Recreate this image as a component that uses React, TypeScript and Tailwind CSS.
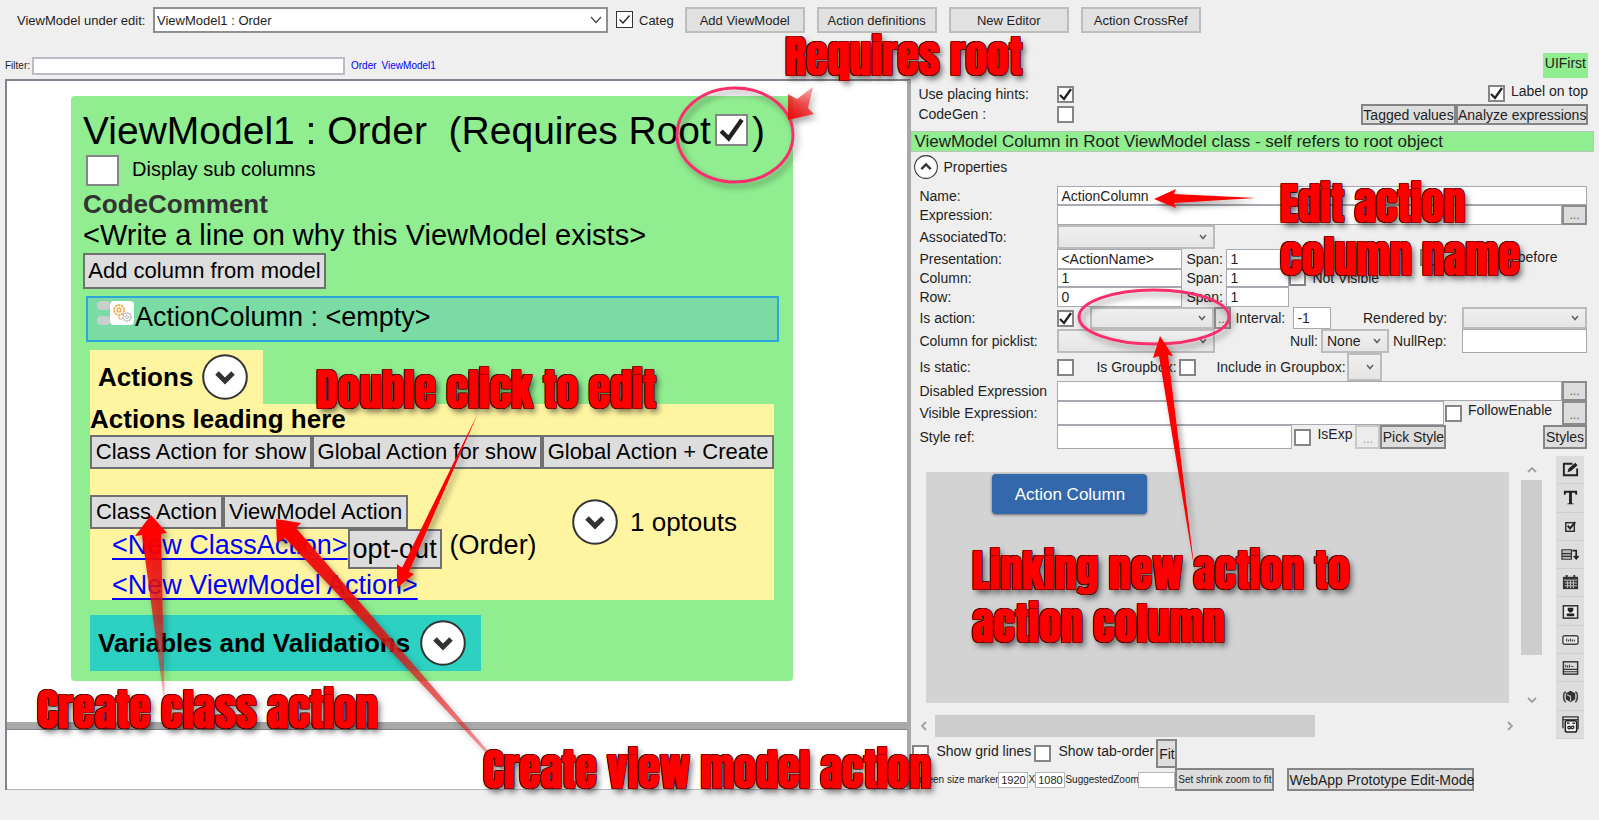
import React from "react";

const CHECK = "M3 9 L7 13 L14 3";

function Check({ id, checked, box = "size-[17px]", thin, label }: { id: string; checked?: boolean; box?: string; thin?: boolean; label?: string }) {
  return (
    <span className={`relative inline-block shrink-0 ${box}`}>
      <input
        id={id}
        type="checkbox"
        defaultChecked={checked}
        aria-label={label}
        className={`peer block size-full appearance-none bg-white ${thin ? "border border-[#333]" : "border-2 border-[#858585]"}`}
      />
      <svg viewBox="0 0 17 17" className="pointer-events-none absolute inset-0 hidden size-full peer-checked:block" fill="none" stroke="#222">
        {thin ? <path d="M3.5 8.5 L7 12 L13.500 4.500" strokeWidth="1.300" /> : <path d={CHECK} strokeWidth="2.300" />}
      </svg>
    </span>
  );
}

function Drop({ id, className, value, label }: { id: string; className: string; value?: string; label?: string }) {
  return (
    <span className={`relative block shrink-0 ${className}`}>
      <select id={id} aria-label={label} className="block size-full appearance-none border-2 border-[#bcbcbc] bg-linear-to-b from-[#efefef] to-[#e5e5e5] pl-1 leading-none">
        <option>{value ?? ""}</option>
      </select>
      <svg viewBox="0 0 8 8" className="pointer-events-none absolute top-1/2 right-2 size-2 -translate-y-1/2" fill="none" stroke="#606060" strokeWidth="1.500">
        <path d="M1 2 L4 5.500 L7 2" />
      </svg>
    </span>
  );
}

function Field({ id, className, value, label }: { id: string; className: string; value?: string; label?: string }) {
  return (
    <input
      id={id}
      type="text"
      aria-label={label}
      defaultValue={value}
      className={`block h-full min-w-0 border border-[#a8a8b0] bg-white px-[3px] leading-none ${className}`}
    />
  );
}

function Dots({ className = "w-[25px]", faded, label }: { className?: string; faded?: boolean; label: string }) {
  return (
    <button
      aria-label={label}
      className={`flex h-full shrink-0 items-end justify-center border-2 text-[12px] leading-none pb-[2px] ${faded ? "border-[#c8c8c8] bg-[#ececec] text-[#999]" : "border-[#8c8c8c] bg-[#dddddd] text-[#555]"} ${className}`}
    >
      ...
    </button>
  );
}

function Row({ label, htmlFor, h, children }: { label: string; htmlFor: string; h: string; children: React.ReactNode }) {
  return (
    <div className={`flex ${h}`}>
      <label htmlFor={htmlFor} className="flex w-[138px] shrink-0 items-center whitespace-nowrap">
        {label}
      </label>
      <div className="flex min-w-0 flex-1 items-stretch">{children}</div>
    </div>
  );
}

function Chevron({ label, up, size = "size-[46px]" }: { label: string; up?: boolean; size?: string }) {
  return (
    <button aria-label={label} className={`block shrink-0 ${size}`}>
      <svg viewBox="0 0 46 46" className="size-full" fill="none">
        <circle cx="23" cy="23" r="21.800" fill="#fff" stroke="#333" strokeWidth="2" />
        {up ? <path d="M14 27 L23 18 L32 27" stroke="#333" strokeWidth="4.500" /> : <path d="M15 19 L23 27 L31 19" stroke="#333" strokeWidth="5" />}
      </svg>
    </button>
  );
}

function TopButton({ children }: { children: string }) {
  return <button className="h-[26px] w-[120px] border-2 border-[#bdbdbd] bg-[#e1e1e1] text-center leading-none">{children}</button>;
}

function BigButton({ children, className = "" }: { children: string; className?: string }) {
  return (
    <button className={`border-2 border-[#707070] bg-[#dddddd] text-[22px] leading-[30px] whitespace-nowrap ${className}`}>{children}</button>
  );
}

function FlatButton({ children, className = "" }: { children: string; className?: string }) {
  return (
    <button className={`shrink-0 border-2 border-[#858585] bg-[#dddddd] leading-none whitespace-nowrap ${className}`}>{children}</button>
  );
}

const note =
  "pointer-events-none absolute font-['Impact','Anton','Roboto_Condensed','Open_Sans_Condensed','Roboto',sans-serif] text-[44px] leading-[53px] font-normal whitespace-nowrap text-[#ff0000] [-webkit-text-stroke:1px_#ff0000] [text-shadow:1px_0_0_#200,-1px_0_0_#200,0_1px_0_#200,0_-1px_0_#200,1px_1px_0_#200,-1px_-1px_0_#200,1px_-1px_0_#200,-1px_1px_0_#200,3px_4px_6px_rgba(0,0,0,0.6)]";

const tools: { name: string; art: React.ReactNode }[] = [
  {
    name: "Edit box",
    art: (
      <>
        <path d="M12 4H3v12h14V9" fill="none" stroke="#222" strokeWidth="2" />
        <path d="M7 13l1-4 7-6 2.500 2.500-7 6z" fill="#222" />
      </>
    ),
  },
  { name: "Text", art: <path d="M3 3h14v4h-1.500l-1-2H11.500v11l2 .5V17h-7v-.5l2-.5V5H5.500l-1 2H3z" fill="#222" /> },
  {
    name: "Check box",
    art: (
      <>
        <rect x="5" y="6" width="9" height="9" fill="none" stroke="#333" strokeWidth="1.600" />
        <path d="M7 9l2.500 3L15 5.500" fill="none" stroke="#222" strokeWidth="2" />
      </>
    ),
  },
  {
    name: "Drop-down",
    art: (
      <>
        <path d="M1 5h10v4H1zM1 9h10v3H1zM1 12h10v3H1z" fill="#bbb" stroke="#333" strokeWidth="1.300" />
        <path d="M12 6h4v8M13.500 11.500l2.500 3 2.500-3" fill="none" stroke="#222" strokeWidth="1.800" />
      </>
    ),
  },
  {
    name: "Calendar",
    art: (
      <>
        <path d="M2 4h16v13H2z" fill="#333" />
        <path d="M6 2v3M14 2v3" stroke="#333" strokeWidth="2" />
        <path d="M3 7.500h14M4 10.500h13M4 13.500h13M7 8v8M10 8v8M13 8v8" stroke="#ccc" strokeWidth="1" />
      </>
    ),
  },
  {
    name: "Image",
    art: (
      <>
        <rect x="2.500" y="4" width="15" height="13" fill="#eee" stroke="#333" strokeWidth="1.600" />
        <path d="M7 6h6v3l-2 2h-2L7 9z M6 12h8v3H6z" fill="#222" />
      </>
    ),
  },
  {
    name: "Button",
    art: (
      <>
        <rect x="2" y="6" width="16" height="9" rx="2" fill="#e8e8e8" stroke="#444" strokeWidth="1.500" />
        <path d="M6 9v3M8 10v2M10 9v3M12 10v2M14 10v2" stroke="#444" strokeWidth="1.200" />
      </>
    ),
  },
  {
    name: "List",
    art: (
      <>
        <rect x="2.500" y="4" width="15" height="13" fill="#ddd" stroke="#333" strokeWidth="1.500" />
        <path d="M3 12h14M3 14.500h14" stroke="#333" strokeWidth="1.200" />
        <path d="M5 7v3M7 8v2M9 7v3M11 9h2" stroke="#333" strokeWidth="1.200" />
      </>
    ),
  },
  {
    name: "Component",
    art: (
      <>
        <path d="M5 5C2 6 2 14 5 16M15 5c3 1 3 9 0 11" fill="none" stroke="#444" strokeWidth="1.600" />
        <path d="M10 4l5 2.500v6.500L10 16l-5-3V6.500z" fill="#333" />
        <path d="M10 9v6M6 8l4 2" stroke="#bbb" strokeWidth="1.200" />
      </>
    ),
  },
  {
    name: "Nested view",
    art: (
      <>
        <path d="M2 14V2h16v13" fill="none" stroke="#333" strokeWidth="1.400" />
        <path d="M2 5h16" stroke="#333" strokeWidth="1.400" />
        <rect x="4.500" y="6" width="12" height="12" rx="2" fill="#eee" stroke="#222" strokeWidth="1.600" />
        <path d="M7 9.500V8.500h2M14 9.500V8.500h-2M7 13c1-2 2.500-1 3.500.500s2.500 1 3-.500-2-2-3 0-3 2-3.500 0" fill="none" stroke="#222" strokeWidth="1.300" />
      </>
    ),
  },
];

function Arrows() {
  return (
    <svg width="1599" height="820" viewBox="0 0 1599 820" className="pointer-events-none absolute top-0 left-0" aria-hidden="true">
      <defs>
        <filter id="soft" x="-20%" y="-20%" width="150%" height="150%">
          <feDropShadow dx="3" dy="4" stdDeviation="3" floodOpacity="0.400" />
        </filter>
        <linearGradient id="fadeRoot" gradientUnits="userSpaceOnUse" x1="790" y1="118" x2="818" y2="84">
          <stop offset="0" stopColor="#ee1010" />
          <stop offset="1" stopColor="#ee1010" stopOpacity="0.250" />
        </linearGradient>
        <linearGradient id="fadeClass" gradientUnits="userSpaceOnUse" x1="151" y1="530" x2="165" y2="708">
          <stop offset="0" stopColor="#ff0000" />
          <stop offset="0.550" stopColor="#d81818" stopOpacity="0.700" />
          <stop offset="1" stopColor="#ff0000" stopOpacity="0.150" />
        </linearGradient>
        <linearGradient id="fadeView" gradientUnits="userSpaceOnUse" x1="276" y1="519" x2="531" y2="801">
          <stop offset="0" stopColor="#ff0000" />
          <stop offset="0.400" stopColor="#d81818" stopOpacity="0.880" />
          <stop offset="0.800" stopColor="#e81818" stopOpacity="0.450" />
          <stop offset="1" stopColor="#ff0000" stopOpacity="0" />
        </linearGradient>
      </defs>
      <g filter="url(#soft)">
        <ellipse cx="735" cy="135" rx="58" ry="47" fill="none" stroke="#f92f6c" strokeWidth="3" />
        <ellipse cx="1154" cy="317" rx="75" ry="27" fill="none" stroke="#f92f6c" strokeWidth="3" />
        <path d="M788 94 L797 99 L813 87 L808 108 L814 114 L788 120 Z" fill="url(#fadeRoot)" />
        <path d="M1154 199 L1176 189 L1174 194 L1256 198 L1174 203 L1176 208 Z" fill="#ff0000" />
        <path d="M397 588 L397 564 L402 568 L478 413 L409 572 L414 574 Z" fill="#ff0000" />
        <path d="M151 515 L167 533 L161 534 L165 708 L142 535 L135 536 Z" fill="url(#fadeClass)" />
        <path d="M276 519 L301 523 L296 528 L531 801 L285 538 L277 543 Z" fill="url(#fadeView)" />
        <path d="M1160 336 L1173 356 L1168 355 L1195 573 L1159 356 L1153 358 Z" fill="#ff0000" />
      </g>
    </svg>
  );
}

export default function App() {
  return (
    <div className="relative flex min-h-screen flex-col overflow-hidden bg-[#efefef] font-['Liberation_Sans',Arial,sans-serif] text-[14px] leading-none text-[#1e1e1e]">
      <header className="flex h-10 items-center pl-[17px] text-[13px]">
        <label htmlFor="vm" className="w-[136px] shrink-0 whitespace-nowrap">
          ViewModel under edit:
        </label>
        <span className="relative block w-[455px]">
          <select id="vm" className="block h-[26px] w-full appearance-none border-2 border-[#8f8f8f] bg-white pl-[2px] leading-none">
            <option>ViewModel1 : Order</option>
          </select>
          <svg viewBox="0 0 12 8" className="pointer-events-none absolute top-[9px] right-[6px] h-2 w-3" fill="none" stroke="#444" strokeWidth="1.200">
            <path d="M1 1 L6 6.500 L11 1" />
          </svg>
        </span>
        <span className="ml-2">
          <Check id="categ" checked thin />
        </span>
        <label htmlFor="categ" className="ml-[6px]">
          Categ
        </label>
        <div className="ml-[11px] flex gap-3">
          <TopButton>Add ViewModel</TopButton>
          <TopButton>Action definitions</TopButton>
          <TopButton>New Editor</TopButton>
          <TopButton>Action CrossRef</TopButton>
        </div>
      </header>

      <main className="flex flex-1">
        <section className="flex w-[57%] flex-col pt-[17px] pl-[5px]">
          <div className="flex h-[18px] items-center text-[10px]">
            <label htmlFor="filter" className="w-[27px] shrink-0">
              Filter:
            </label>
            <input id="filter" type="text" className="h-[18px] w-[313px] border-2 border-[#bcbcc4] bg-white px-1" />
            <a href="#order" className="ml-[6px] text-[#0000ff]">
              Order
            </a>
            <a href="#vm1" className="ml-[5px] text-[#0000ff]">
              ViewModel1
            </a>
          </div>

          <div className="mt-1 border-t-2 border-r-4 border-l-2 border-[#a9a9a9] border-t-[#82858f] border-l-[#82858f] bg-[#a9a9a9]">
            <div className="bg-white px-16 pt-[15px] pb-[41px]">
              <div className="w-[722px] rounded bg-[#90ee90] pt-3 pl-3 pb-[10px] text-black">
                <div className="flex h-[44px] items-center text-[39px] whitespace-pre">
                  <label htmlFor="root">ViewModel1 : Order{"  "}(Requires Root</label>
                  <span className="ml-1 flex">
                    <Check id="root" checked box="h-[32px] w-[33px]" />
                  </span>
                  <span className="ml-1">)</span>
                </div>
                <div className="mt-[3px] flex h-8 items-start pl-[3px]">
                  <Check id="sub" box="h-[31px] w-[33px]" />
                  <label htmlFor="sub" className="ml-[13px] text-[20px] leading-[28px] whitespace-nowrap">
                    Display sub columns
                  </label>
                </div>
                <h2 className="mt-[3px] text-[26px] leading-[28px] font-bold text-[#333]">CodeComment</h2>
                <p className="text-[29px] leading-[35px] whitespace-nowrap">&lt;Write a line on why this ViewModel exists&gt;</p>
                <BigButton className="block w-[243px] py-px">Add column from model</BigButton>
                <div className="mt-[7px] ml-[3px] flex h-[46px] w-[693px] items-start border-2 border-[#2ba6da] bg-[#7adca4] pl-[9px]">
                  <svg viewBox="0 0 38 26" className="mt-[2px] h-[26px] w-[38px]" fill="none">
                    <rect x="0" y="1" width="13" height="9" rx="4" fill="#c9cfcb" />
                    <rect x="0" y="16" width="13" height="9" rx="4" fill="#c9cfcb" />
                    <rect x="13" y="1" width="24" height="24" rx="4" fill="#fff" />
                    <circle cx="22" cy="10" r="5" stroke="#f2a64a" strokeWidth="1.600" strokeDasharray="2.500 .6" />
                    <circle cx="22" cy="10" r="2" stroke="#f2a64a" strokeWidth="1.300" />
                    <circle cx="30" cy="17" r="4" stroke="#b5b5b5" strokeWidth="1.500" strokeDasharray="2 .6" />
                    <circle cx="30" cy="17" r="1.500" stroke="#b5b5b5" />
                    <path d="M22 15 v4 h3" stroke="#f2a64a" />
                  </svg>
                  <span className="text-[27px] leading-[38px] whitespace-nowrap">ActionColumn : &lt;empty&gt;</span>
                </div>

                <div className="mt-2 ml-[7px] w-[684px]">
                  <div className="flex h-[54px] w-[173px] items-center bg-[#fff5a1] pl-2">
                    <h3 className="mr-[10px] w-[94px] text-[26px] leading-[30px] font-bold">Actions</h3>
                    <Chevron label="Collapse actions" />
                  </div>
                  <div className="bg-[#fff5a1]">
                    <h3 className="h-[31px] text-[26px] leading-[31px] font-bold">Actions leading here</h3>
                    <div className="flex">
                      <BigButton className="w-[222px]">Class Action for show</BigButton>
                      <BigButton className="w-[230px]">Global Action for show</BigButton>
                      <BigButton className="w-[232px]">Global Action + Create</BigButton>
                    </div>
                    <div className="flex pt-[26px]">
                      <div className="w-[482px]">
                        <div className="flex">
                          <BigButton className="w-[133px]">Class Action</BigButton>
                          <BigButton className="w-[185px]">ViewModel Action</BigButton>
                        </div>
                        <div className="flex h-10 items-start pl-[22px] text-[27px] leading-[32px] whitespace-nowrap">
                          <a href="#newclass" className="text-[#0000ff] underline decoration-2 underline-offset-4">
                            &lt;New ClassAction&gt;
                          </a>
                          <button className="h-10 w-[94px] border-2 border-[#707070] bg-[#dddddd] leading-[36px]">opt-out</button>
                          <span className="ml-2">(Order)</span>
                        </div>
                        <div className="h-[31px] pl-[22px] text-[27px] leading-[32px] whitespace-nowrap">
                          <a href="#newvm" className="text-[#0000ff] underline decoration-2 underline-offset-4">
                            &lt;New ViewModel Action&gt;
                          </a>
                        </div>
                      </div>
                      <div className="mt-1 flex h-[46px] items-center gap-3 text-[26px] whitespace-nowrap">
                        <Chevron label="Expand optouts" />
                        <span>1 optouts</span>
                      </div>
                    </div>
                  </div>
                  <div className="mt-[15px] flex h-14 w-[391px] items-center bg-[#2dd1c1] pl-2">
                    <h3 className="mr-[5px] w-[317px] text-[26px] leading-[30px] font-bold whitespace-nowrap">Variables and Validations</h3>
                    <Chevron label="Expand variables and validations" />
                  </div>
                </div>
              </div>
            </div>
            <div className="mt-[7px] h-[61px] border-b border-[#b8b8c0] border-t border-t-[#82858f] bg-white" />
          </div>
        </section>

        <section className="flex min-w-0 flex-1 flex-col pt-[13px] pr-[5px]">
          <div className="flex justify-end pr-[6px]">
            <span className="h-[25px] bg-[#90ee90] px-[2px] pt-[3px] leading-[14px]">UIFirst</span>
          </div>
          <div className="mt-[6px] flex pr-[6px] pl-[7px]">
            <div>
              <div className="flex h-5 items-center">
                <label htmlFor="hints" className="w-[139px]">
                  Use placing hints:
                </label>
                <Check id="hints" checked />
              </div>
              <div className="flex h-5 items-center">
                <label htmlFor="codegen" className="w-[139px]">
                  CodeGen :
                </label>
                <Check id="codegen" />
              </div>
            </div>
            <div className="ml-auto flex flex-col items-end">
              <div className="flex h-5 items-start gap-[6px]">
                <span className="mt-px">
                  <Check id="ontop" checked />
                </span>
                <label htmlFor="ontop">Label on top</label>
              </div>
              <div className="flex">
                <FlatButton className="h-[21px] w-[95px]">Tagged values</FlatButton>
                <FlatButton className="h-[21px] w-[132px]">Analyze expressions</FlatButton>
              </div>
            </div>
          </div>
          <h2 className="mt-[6px] h-[21px] border border-[#b5c8b5] bg-[#90ee90] pl-[2px] text-[17px] leading-[20px] whitespace-nowrap">
            ViewModel Column in Root ViewModel class - self refers to root object
          </h2>
          <div className="mt-[3px] flex items-center gap-[5px] pl-[3px]">
            <Chevron label="Collapse properties" up size="size-6" />
            <span>Properties</span>
          </div>

          <div className="mt-[7px] pr-[7px] pl-2">
            <Row label="Name:" htmlFor="name" h="h-[19px]">
              <Field id="name" className="flex-1" value="ActionColumn" />
            </Row>
            <Row label="Expression:" htmlFor="expr" h="h-5">
              <Field id="expr" className="flex-1" />
              <Dots label="Edit expression" />
            </Row>
            <Row label="AssociatedTo:" htmlFor="assoc" h="h-6">
              <Drop id="assoc" className="w-[158px]" />
            </Row>
            <Row label="Presentation:" htmlFor="pres" h="h-5">
              <Field id="pres" className="w-[125px]" value="<ActionName>" />
              <label htmlFor="span1" className="flex w-11 items-center pl-1">
                Span:
              </label>
              <Field id="span1" className="w-[63px]" value="1" />
              <span className="ml-[131px] flex">
                <Check id="before" />
              </span>
              <label htmlFor="before" className="w-[120px] pt-px text-right">
                Label before
              </label>
            </Row>
            <Row label="Column:" htmlFor="col" h="h-[18px]">
              <Field id="col" className="w-[125px]" value="1" />
              <label htmlFor="span2" className="flex w-11 items-center pl-1">
                Span:
              </label>
              <Field id="span2" className="w-[63px]" value="1" />
              <Check id="notvis" />
              <label htmlFor="notvis" className="flex items-center pl-[6px]">
                Not Visible
              </label>
            </Row>
            <Row label="Row:" htmlFor="row" h="h-5">
              <Field id="row" className="w-[125px]" value="0" />
              <label htmlFor="span3" className="flex w-11 items-center pl-1">
                Span:
              </label>
              <Field id="span3" className="w-[63px]" value="1" />
            </Row>
            <Row label="Is action:" htmlFor="isaction" h="h-[22px]">
              <span className="flex w-[33px] items-center">
                <Check id="isaction" checked />
              </span>
              <Drop id="action" className="w-[124px]" label="Action" />
              <Dots label="Pick action" className="w-[17px]" />
              <label htmlFor="interval" className="flex w-[62px] items-center pl-1">
                Interval:
              </label>
              <Field id="interval" className="w-[38px]" value="-1" />
              <label htmlFor="rendered" className="ml-auto flex w-[99px] items-center">
                Rendered by:
              </label>
              <Drop id="rendered" className="w-[125px]" />
            </Row>
            <Row label="Column for picklist:" htmlFor="picklist" h="h-6">
              <Drop id="picklist" className="w-[158px]" />
              <label htmlFor="null" className="ml-auto flex w-[31px] items-center">
                Null:
              </label>
              <Drop id="null" className="w-[68px]" value="None" />
              <label htmlFor="nullrep" className="flex w-[73px] items-center pl-1">
                NullRep:
              </label>
              <Field id="nullrep" className="w-[125px]" />
            </Row>
            <Row label="Is static:" htmlFor="static" h="h-7">
              <span className="flex items-center">
                <Check id="static" />
              </span>
              <label htmlFor="group" className="flex w-[105px] items-center pl-[22px]">
                Is Groupbox:
              </label>
              <span className="flex items-center">
                <Check id="group" />
              </span>
              <label htmlFor="ingroup" className="flex w-[151px] items-center pl-5">
                Include in Groupbox:
              </label>
              <Drop id="ingroup" className="w-[35px]" />
            </Row>
            <Row label="Disabled Expression" htmlFor="disabled" h="h-5">
              <Field id="disabled" className="flex-1" />
              <Dots label="Edit disabled expression" />
            </Row>
            <Row label="Visible Expression:" htmlFor="visible" h="h-6">
              <Field id="visible" className="flex-1" />
              <span className="flex items-center pl-px">
                <Check id="follow" />
              </span>
              <label htmlFor="follow" className="w-[100px] pt-[2px] pl-[6px]">
                FollowEnable
              </label>
              <Dots label="Edit visible expression" />
            </Row>
            <Row label="Style ref:" htmlFor="style" h="h-6">
              <Field id="style" className="w-[235px]" />
              <span className="flex items-center pl-[2px]">
                <Check id="isexp" />
              </span>
              <label htmlFor="isexp" className="w-11 pt-[2px] pl-[6px]">
                IsExp
              </label>
              <Dots label="Edit style expression" faded />
              <FlatButton className="w-[66px]">Pick Style</FlatButton>
              <FlatButton className="ml-auto w-[44px]">Styles</FlatButton>
            </Row>
          </div>

          <div className="mt-[7px] flex pr-[10px] pl-[7px]">
            <div className="min-w-0 flex-1">
              <div className="flex">
                <div className="mt-4 ml-2 h-[231px] flex-1 bg-[#d3d3d3] pt-[2px] pl-[66px]">
                  <button className="h-10 w-[155px] rounded-sm bg-[#3468ac] text-[17px] text-white shadow-[0_1px_3px_rgba(0,0,0,0.5)]">Action Column</button>
                </div>
                <div className="ml-3 flex w-[21px] flex-col items-center pt-[11px]">
                  <svg viewBox="0 0 10 6" className="h-[6px] w-[10px]" fill="none" stroke="#a0a0a0" strokeWidth="1.800">
                    <path d="M1 5 L5 1 L9 5" />
                  </svg>
                  <div className="mt-[7px] h-[175px] w-full bg-[#cdcdcd]" />
                  <svg viewBox="0 0 10 6" className="mt-auto h-[6px] w-[10px]" fill="none" stroke="#a0a0a0" strokeWidth="1.800">
                    <path d="M1 1 L5 5 L9 1" />
                  </svg>
                </div>
              </div>
              <div className="mt-3 flex h-[22px] items-center pr-[29px] pl-[3px]">
                <svg viewBox="0 0 6 10" className="h-[10px] w-[6px]" fill="none" stroke="#a0a0a0" strokeWidth="1.800">
                  <path d="M5 1 L1 5 L5 9" />
                </svg>
                <div className="ml-2 h-[22px] w-[380px] bg-[#cdcdcd]" />
                <svg viewBox="0 0 6 10" className="ml-auto h-[10px] w-[6px]" fill="none" stroke="#a0a0a0" strokeWidth="1.800">
                  <path d="M1 1 L5 5 L1 9" />
                </svg>
              </div>
            </div>
            <div className="ml-[14px] flex h-[283px] w-7 flex-col">
              {tools.map((t) => (
                <button key={t.name} aria-label={t.name} className="flex w-7 flex-1 items-center justify-center border-b border-[#cfcfcf] bg-[#dddddd]">
                  <svg viewBox="0 0 20 20" className="size-[19px]">
                    {t.art}
                  </svg>
                </button>
              ))}
            </div>
          </div>

          <div className="flex h-[29px] items-start pl-px">
            <span className="mt-[6px]">
              <Check id="grid" />
            </span>
            <label htmlFor="grid" className="mt-[5px] w-[105px] pl-[7px]">
              Show grid lines
            </label>
            <span className="mt-[6px]">
              <Check id="tab" />
            </span>
            <label htmlFor="tab" className="mt-[5px] w-[105px] pl-[7px]">
              Show tab-order
            </label>
            <FlatButton className="h-[29px] w-[21px]">Fit</FlatButton>
          </div>
          <div className="flex h-[23px] items-center pl-px text-[10px] whitespace-nowrap">
            <label htmlFor="mw" className="w-[86px] text-right">
              Screen size marker
            </label>
            <input id="mw" type="text" defaultValue="1920" className="h-4 w-[30px] border border-[#b4b4ba] bg-white text-center text-[11px]" />
            <label htmlFor="mh" className="w-[7px] text-center">
              X
            </label>
            <input id="mh" type="text" defaultValue="1080" className="h-4 w-[30px] border border-[#b4b4ba] bg-white text-center text-[11px]" />
            <label htmlFor="zoom" className="w-[73px]">
              SuggestedZoom
            </label>
            <input id="zoom" type="text" className="h-4 w-[37px] border border-[#b4b4ba] bg-white" />
            <FlatButton className="h-[23px] w-[99px]">Set shrink zoom to fit</FlatButton>
            <FlatButton className="ml-[13px] h-[23px] w-[187px] text-[14px]">WebApp Prototype Edit-Mode</FlatButton>
          </div>
        </section>
      </main>

      <Arrows />
      <p className={`${note} top-[30px] left-[785px]`}>Requires root</p>
      <p className={`${note} top-[177px] left-[1280px]`}>
        Edit action
        <br />
        column name
      </p>
      <p className={`${note} top-[363px] left-[316px]`}>Double click to edit</p>
      <p className={`${note} top-[544px] left-[972px]`}>
        Linking new action to
        <br />
        action column
      </p>
      <p className={`${note} top-[683px] left-[37px]`}>Create class action</p>
      <p className={`${note} top-[743px] left-[483px]`}>Create view model action</p>
    </div>
  );
}
